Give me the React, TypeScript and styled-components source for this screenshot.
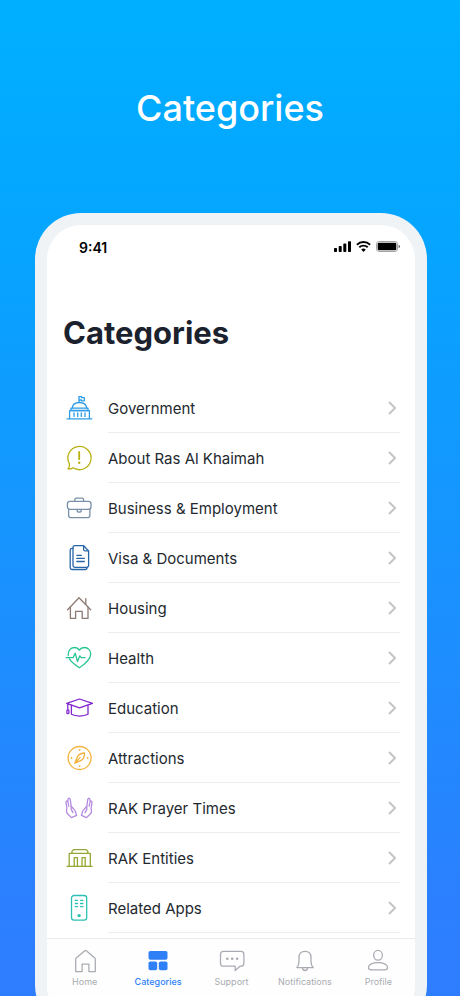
import React from "react";
import styled, { createGlobalStyle } from "styled-components";

const GlobalStyle = createGlobalStyle`
  *, *::before, *::after { box-sizing: border-box; }
  html, body { margin: 0; }
  body { font-family: Inter, "Liberation Sans", sans-serif; -webkit-font-smoothing: antialiased; }
`;

const Page = styled.main`
  height: 100vh;
  overflow: hidden;
  display: flex;
  flex-direction: column;
  background: linear-gradient(180deg, #00afff 0%, #05a6ff 22%, #2b80ff 90%, #2f7dff 100%);
`;

const Banner = styled.h2`
  flex: none;
  margin: 0;
  padding: 84px 16px 81px;
  font-size: 36px;
  line-height: 48px;
  font-weight: 500;
  text-align: center;
  color: #fff;
`;

const Phone = styled.div`
  flex: none;
  margin: 0 33px 0 35px;
  padding: 12px;
  border-radius: 46px;
  background: #eff3f6;
`;

const Screen = styled.div`
  display: flex;
  flex-direction: column;
  border-radius: 34px;
  overflow: hidden;
  background: #fff;
`;

const StatusBar = styled.div`
  display: flex;
  align-items: center;
  justify-content: space-between;
  height: 44px;
  padding: 0 15px 0 32px;
`;

const Clock = styled.time`
  padding-top: 2px;
  font-size: 14px;
  line-height: 20px;
  font-weight: 600;
  color: #000;
`;

const StatusIcons = styled.div`
  display: flex;
  align-items: center;
  gap: 5px;
  padding-bottom: 2px;

  svg { display: block; }
`;

const Title = styled.h1`
  margin: 0;
  padding: 44px 16px 30px;
  font-size: 31px;
  line-height: 40px;
  font-weight: 700;
  color: #1b222d;
`;

const List = styled.ul`
  margin: 0;
  padding: 0 15px 5px 18px;
  list-style: none;
`;

const Row = styled.a`
  display: flex;
  align-items: center;
  gap: 15px;
  height: 50px;
  color: #24292f;
  text-decoration: none;
`;

const RowIcon = styled.svg<{ $color: string }>`
  flex: none;
  display: block;
  width: 28px;
  height: 28px;
  fill: none;
  stroke: ${(p) => p.$color};
  stroke-width: 1.3;
  stroke-linecap: round;
  stroke-linejoin: round;

  .solid { fill: ${(p) => p.$color}; stroke: none; }
`;

const RowBody = styled.span`
  flex: 1;
  display: flex;
  align-items: center;
  justify-content: space-between;
  height: 50px;
  padding-right: 3px;
  border-bottom: 1px solid #ececee;
`;

const RowLabel = styled.span`
  padding-top: 2px;
  font-size: 15px;
  line-height: 20px;
`;

const Chevron = styled.svg`
  display: block;
  width: 10px;
  height: 14px;
  fill: none;
  stroke: #c4c4c7;
  stroke-width: 2;
`;

const TabBar = styled.nav`
  display: flex;
  height: 81px;
  padding-left: 1px;
  border-top: 1px solid #e9ebed;
  background: #fefefe;
`;

const Tab = styled.button<{ $active?: boolean }>`
  flex: 1 1 0;
  min-width: 0;
  display: flex;
  flex-direction: column;
  align-items: center;
  margin: 0;
  padding: 8px 0 0;
  border: 0;
  background: none;
  font-family: inherit;
  font-size: 9px;
  line-height: 14px;
  font-weight: ${(p) => (p.$active ? 500 : 400)};
  color: ${(p) => (p.$active ? "#2f80f7" : "#a9acb2")};
  cursor: pointer;

  svg {
    display: block;
    width: 28px;
    height: 28px;
    fill: none;
    stroke: currentColor;
    stroke-width: 1.3;
    stroke-linecap: round;
    stroke-linejoin: round;
  }
  .solid { fill: currentColor; stroke: none; }
`;

type Item = { label: string; color: string; art: React.ReactNode };

const hand = (
  <>
    <path d="M3 6.4C2.600 4 4.800 3.600 5.200 5.400L6.200 12.200L9.200 15.600C9.800 16.200 10.200 16.900 10.500 17.800L11.600 21.400L6.400 23.600L2.600 19.800C1.800 18.900 1.400 18.200 1.500 17L1.900 14L1 8.600C0.800 6.800 2.500 6.400 3 8L3.800 12.200" />
    <path d="M6.200 12.200V15.400L8 18.600" />
  </>
);

const items: Item[] = [
  {
    label: "Government",
    color: "#2f9de6",
    art: (
      <>
        <path d="M14 8.500V2.400M14 2.700H16.600V3.600H19.300V6.800H16.400V6H14" />
        <path d="M7.300 14C7.600 10.600 10.400 8.500 14.400 8.500S21.300 10.600 21.700 14" />
        <path d="M6 14.200H23V16.500H6Z" />
        <path d="M4.600 24.600V16.600H24.400V24.600M9 18.800V22.400M12.700 18.800V22.400M16.300 18.800V22.400M20 18.800V22.400M2 24.800H26.800" />
      </>
    ),
  },
  {
    label: "About Ras Al Khaimah",
    color: "#b9b012",
    art: (
      <>
        <path d="M4.400 19.800A11.600 11.600 0 1 1 8.200 23.800C6.800 24.800 4.900 25.200 3 24.900C4.300 23.500 4.700 21.800 4.400 19.800Z" />
        <path d="M14.200 8V15.200" strokeWidth="1.800" />
        <circle className="solid" cx="14.200" cy="18.700" r="1.200" />
      </>
    ),
  },
  {
    label: "Business & Employment",
    color: "#7890a8",
    art: (
      <>
        <rect x="2.400" y="7.400" width="23.600" height="7.900" rx="2.600" />
        <path d="M9.800 7.200V5.800Q9.800 4.200 11.400 4.200H17Q18.600 4.200 18.600 5.800V7.200" />
        <path d="M3.600 15V21.200Q3.600 23.700 6.100 23.700H22.400Q24.900 23.700 24.900 21.200V15" />
        <path d="M12.200 15.400V16.200A2 2 0 0 0 16.200 16.200V15.400" />
      </>
    ),
  },
  {
    label: "Visa & Documents",
    color: "#2665a8",
    art: (
      <>
        <path d="M8 3.500Q8 1.700 9.800 1.700H18.600L23.600 6.900V21.500Q23.600 23.300 21.800 23.300H9.800Q8 23.300 8 21.500Z" />
        <path d="M18.600 1.900V5.400Q18.600 6.900 20.100 6.900H23.400" />
        <path d="M7.800 4.300H7Q5.200 4.300 5.200 6.100V23.700Q5.200 25.500 7 25.500H20.200Q22 25.500 22 23.500" />
        <path d="M11.800 11.300H16.500M11.800 14.400H19.300M11.800 17.500H19.300" />
      </>
    ),
  },
  {
    label: "Housing",
    color: "#8c7a74",
    art: (
      <>
        <path d="M2.600 15.700L14 3.800L25.700 15.700" />
        <path d="M5.400 13.200V24.400H10.600V17.300H17.200V24.400H23V13.200M20.800 10.300V4.700" />
      </>
    ),
  },
  {
    label: "Health",
    color: "#27c493",
    art: (
      <>
        <path d="M3.200 11.500C2.700 7.200 5.400 3.500 9.200 3.500C11.400 3.500 13.300 4.500 14.400 6.200C15.500 4.500 17.400 3.500 19.600 3.500C23 3.500 25.700 6.400 25.700 9.900C25.700 15.500 20.200 19.700 14.400 23.800C10.300 21.100 6.300 18.100 4.400 14.900" />
        <path d="M1.200 13.700H8L10.200 9.200L12.500 17.600L14.800 11.800L16.300 13.700H20" />
      </>
    ),
  },
  {
    label: "Education",
    color: "#8226cf",
    art: (
      <>
        <path d="M1.700 9.300L14.500 5L27.500 9.300L14.500 13.900Z" />
        <path d="M6.400 11.200V20.300C10.700 22.600 18.700 22.600 23 20.300V11.200" />
        <path d="M2.800 9.800V15.600" />
        <rect x="1.900" y="15.800" width="2" height="3.800" rx="0.900" />
      </>
    ),
  },
  {
    label: "Attractions",
    color: "#f3b23e",
    art: (
      <>
        <circle cx="14.600" cy="14" r="11.500" />
        <path d="M19.600 9C19.600 12 18.400 15 16.200 16.400L9.800 19.200L12.400 12.800C13.800 10.600 16.400 9 19.600 9ZM9.800 19.200L15 13.600" />
        <circle className="solid" cx="14.600" cy="5.900" r="0.900" />
        <circle className="solid" cx="14.600" cy="22.100" r="0.900" />
        <circle className="solid" cx="6.500" cy="14" r="0.900" />
        <circle className="solid" cx="22.700" cy="14" r="0.900" />
      </>
    ),
  },
  {
    label: "RAK Prayer Times",
    color: "#b48be0",
    art: (
      <>
        <g>{hand}</g>
        <g transform="translate(28 0) scale(-1 1)">{hand}</g>
      </>
    ),
  },
  {
    label: "RAK Entities",
    color: "#93a832",
    art: (
      <>
        <path d="M2 22.400H27M4.200 22.200V9.400H25.300V22.200" />
        <path d="M7 9.200V7.200L8.600 5.600H21.200L22.800 7.200V9.200" />
        <path d="M9.200 22.200V13.600H12.400V22.200M17 22.200V13.600H20.200V22.200" />
      </>
    ),
  },
  {
    label: "Related Apps",
    color: "#2fc0b4",
    art: (
      <>
        <rect x="6.500" y="1.500" width="15.200" height="24.700" rx="2.600" />
        <path d="M10.300 6.300H12.600M15.600 6.300H17.900M10.300 9.500H12.600M15.600 9.500H17.900M10.300 12.700H12.600M15.600 12.700H17.900" />
        <circle className="solid" cx="14.100" cy="21.600" r="1.700" />
      </>
    ),
  },
];

const tabs: { label: string; active?: boolean; art: React.ReactNode }[] = [
  {
    label: "Home",
    art: <path d="M4.700 12Q4.700 11.400 5.200 11L13.700 3.800Q14.500 3.200 15.300 3.800L23.800 11Q24.300 11.400 24.300 12V24.600H17.900V17.200H11.100V24.600H4.700Z" />,
  },
  {
    label: "Categories",
    active: true,
    art: (
      <>
        <rect className="solid" x="4.500" y="4" width="19" height="8.700" rx="1.800" />
        <rect className="solid" x="4.500" y="14.500" width="8.700" height="8.700" rx="1.800" />
        <rect className="solid" x="14.800" y="14.500" width="8.700" height="8.700" rx="1.800" />
      </>
    ),
  },
  {
    label: "Support",
    art: (
      <>
        <path d="M5.500 4.400H22.900Q25.900 4.400 25.900 7.400V16.200Q25.900 19.200 22.900 19.200H22L17.200 23.600V19.200H5.500Q2.500 19.200 2.500 16.200V7.400Q2.500 4.400 5.500 4.400Z" />
        <circle className="solid" cx="9.300" cy="11.800" r="1.300" />
        <circle className="solid" cx="14.200" cy="11.800" r="1.300" />
        <circle className="solid" cx="19.100" cy="11.800" r="1.300" />
      </>
    ),
  },
  {
    label: "Notifications",
    art: (
      <>
        <path d="M5.800 20.600C7.500 18.800 8 17 8 14.500V10.500C8 6.800 10.400 4.400 14 4.400S20 6.800 20 10.500V14.500C20 17 20.500 18.800 22.200 20.600Z" />
        <path d="M11.500 20.800A2.500 2.700 0 0 0 16.500 20.800" />
      </>
    ),
  },
  {
    label: "Profile",
    art: (
      <>
        <ellipse cx="14" cy="8.300" rx="4.400" ry="4.900" />
        <path d="M4.500 20.400C4.500 17.500 8.800 15.700 14 15.700S23.500 17.500 23.500 20.400C23.500 22 22.600 22.800 21 22.800H7C5.400 22.800 4.500 22 4.500 20.400Z" />
      </>
    ),
  },
];

export default function App() {
  return (
    <>
      <GlobalStyle />
      <Page>
        <Banner>Categories</Banner>
        <Phone>
          <Screen>
            <StatusBar>
              <Clock>9:41</Clock>
              <StatusIcons>
                <svg width="17" height="11" viewBox="0 0 17 11" aria-hidden="true">
                  <rect x="0" y="7" width="3" height="4" rx="0.800" />
                  <rect x="4.700" y="5" width="3" height="6" rx="0.800" />
                  <rect x="9.300" y="2.600" width="3" height="8.400" rx="0.800" />
                  <rect x="14" y="0.300" width="3" height="10.700" rx="0.800" />
                </svg>
                <svg width="15" height="11" viewBox="0 0 15 11" aria-hidden="true">
                  <path d="M0.900 3.700A9.600 9.600 0 0 1 14.100 3.700M3.300 6.300A6.100 6.100 0 0 1 11.700 6.300" fill="none" stroke="#000" strokeWidth="1.900" />
                  <path d="M5.200 8.600A3.400 3.400 0 0 1 9.800 8.600L7.500 11Z" />
                </svg>
                <svg width="24" height="11" viewBox="0 0 24 11" aria-hidden="true">
                  <rect x="0.500" y="0.500" width="21" height="10" rx="2.600" fill="none" stroke="#a5a5a5" />
                  <rect x="1.700" y="1.700" width="18.600" height="7.600" rx="1.300" />
                  <path d="M22.600 3.700Q24 4.200 24 5.500T22.600 7.300Z" fill="#555" />
                </svg>
              </StatusIcons>
            </StatusBar>
            <Title>Categories</Title>
            <List>
              {items.map((item) => (
                <li key={item.label}>
                  <Row href="#">
                    <RowIcon viewBox="0 0 28 28" $color={item.color} aria-hidden="true">
                      {item.art}
                    </RowIcon>
                    <RowBody>
                      <RowLabel>{item.label}</RowLabel>
                      <Chevron viewBox="0 0 10 14" aria-hidden="true">
                        <path d="M2 1L8 7L2 13" />
                      </Chevron>
                    </RowBody>
                  </Row>
                </li>
              ))}
            </List>
            <TabBar aria-label="Main">
              {tabs.map((tab) => (
                <Tab key={tab.label} type="button" $active={tab.active} aria-current={tab.active ? "page" : undefined}>
                  <svg viewBox="0 0 28 28" aria-hidden="true">
                    {tab.art}
                  </svg>
                  {tab.label}
                </Tab>
              ))}
            </TabBar>
          </Screen>
        </Phone>
      </Page>
    </>
  );
}
